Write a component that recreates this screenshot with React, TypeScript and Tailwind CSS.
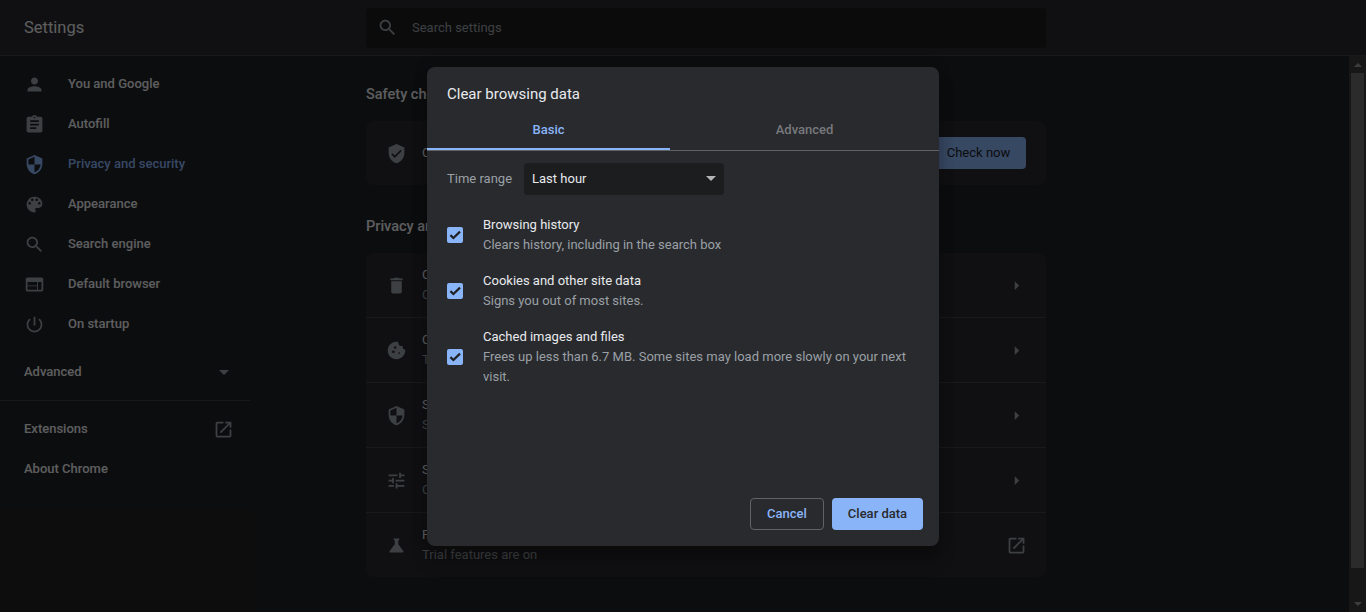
const icons = {
  person: "M12 12c2.21 0 4-1.79 4-4s-1.79-4-4-4-4 1.79-4 4 1.79 4 4 4zm0 2c-2.67 0-8 1.34-8 4v2h16v-2c0-2.66-5.33-4-8-4z",
  assignment: "M19 3h-4.18C14.4 1.84 13.3 1 12 1c-1.3 0-2.4.84-2.82 2H5c-1.1 0-2 .9-2 2v14c0 1.1.9 2 2 2h14c1.1 0 2-.9 2-2V5c0-1.1-.9-2-2-2zm-7 0c.55 0 1 .45 1 1s-.45 1-1 1-1-.45-1-1 .45-1 1-1zm2 14H7v-2h7v2zm3-4H7v-2h10v2zm0-4H7V7h10v2z",
  security: "M12 1L3 5v6c0 5.55 3.84 10.74 9 12 5.16-1.26 9-6.45 9-12V5l-9-4zm0 10.99h7c-.53 4.12-3.28 7.79-7 8.94V12H5V6.3l7-3.11v8.8z",
  palette: "M12 3c-4.97 0-9 4.03-9 9s4.03 9 9 9c.83 0 1.5-.67 1.5-1.5 0-.39-.15-.74-.39-1.01-.23-.26-.38-.61-.38-.99 0-.83.67-1.5 1.5-1.5H16c2.76 0 5-2.24 5-5 0-4.42-4.03-8-9-8zm-5.5 9c-.83 0-1.5-.67-1.5-1.5S5.67 9 6.5 9 8 9.67 8 10.5 7.33 12 6.5 12zm3-4C8.67 8 8 7.33 8 6.5S8.67 5 9.5 5s1.5.67 1.5 1.5S10.33 8 9.5 8zm5 0c-.83 0-1.5-.67-1.5-1.5S13.67 5 14.5 5s1.5.67 1.5 1.5S15.33 8 14.5 8zm3 4c-.83 0-1.5-.67-1.5-1.5S16.67 9 17.5 9s1.5.67 1.5 1.5-.67 1.5-1.5 1.5z",
  search: "M15.5 14h-.79l-.28-.27C15.41 12.59 16 11.11 16 9.5 16 5.91 13.09 3 9.5 3S3 5.91 3 9.5 5.91 16 9.5 16c1.61 0 3.09-.59 4.23-1.57l.27.28v.79l5 4.99L20.49 19l-4.99-5zm-6 0C7.01 14 5 11.99 5 9.5S7.01 5 9.5 5 14 7.01 14 9.5 11.99 14 9.5 14z",
  web: "M20 4H4c-1.1 0-1.99.9-1.99 2L2 18c0 1.1.9 2 2 2h16c1.1 0 2-.9 2-2V6c0-1.1-.9-2-2-2zm-5 14H4v-4h11v4zm0-5H4V9h11v4zm5 5h-4V9h4v9z",
  power: "M13 3h-2v10h2V3zm4.83 2.17l-1.42 1.42C17.99 7.86 19 9.81 19 12c0 3.87-3.13 7-7 7s-7-3.13-7-7c0-2.19 1.01-4.14 2.58-5.42L6.17 5.17C4.23 6.82 3 9.26 3 12c0 4.97 4.03 9 9 9s9-4.03 9-9c0-2.74-1.23-5.18-3.17-6.83z",
  openNew: "M19 19H5V5h7V3H5c-1.11 0-2 .9-2 2v14c0 1.1.89 2 2 2h14c1.1 0 2-.9 2-2v-7h-2v7zM14 3v2h3.59l-9.83 9.83 1.41 1.41L19 6.41V10h2V3h-7z",
  trash: "M6 19c0 1.1.9 2 2 2h8c1.1 0 2-.9 2-2V7H6v12zM19 4h-3.5l-1-1h-5l-1 1H5v2h14V4z",
  verified: "M12 1L3 5v6c0 5.55 3.84 10.74 9 12 5.16-1.26 9-6.45 9-12V5l-9-4zm-2 16l-4-4 1.41-1.41L10 14.17l6.59-6.59L18 9l-8 8z",
  cookie: "M21.95 10.99c-1.79-.03-3.7-1.95-2.68-4.22-2.97 1-5.78-1.59-5.19-4.56C7.11.74 2 6.41 2 12c0 5.52 4.48 10 10 10 5.89 0 10.54-5.08 9.95-11.01zM8.5 15c-.83 0-1.5-.67-1.5-1.5S7.67 12 8.5 12s1.5.67 1.5 1.5S9.33 15 8.5 15zm2-5C9.67 10 9 9.33 9 8.5S9.67 7 10.5 7s1.5.67 1.5 1.5-.67 1.5-1.5 1.5zm4.5 6c-.55 0-1-.45-1-1s.45-1 1-1 1 .45 1 1-.45 1-1 1z",
  tune: "M3 17v2h6v-2H3zM3 5v2h10V5H3zm10 16v-2h8v-2h-8v-2h-2v6h2zM7 9v2H3v2h4v2h2V9H7zm14 4v-2H11v2h10zm-6-4h2V7h4V5h-4V3h-2v6z",
  science: "M19.8 18.4L14 10.67V6.5l1.35-1.69c.26-.33.03-.81-.39-.81H9.04c-.42 0-.65.48-.39.81L10 6.5v4.17L4.2 18.4c-.49.66-.02 1.6.8 1.6h14c.82 0 1.29-.94.8-1.6z",
  caretRight: "M10 17l5-5-5-5v10z",
};

function Icon({ d, className }: { d: string; className?: string }) {
  return (
    <svg viewBox="0 0 24 24" fill="currentColor" className={className}>
      <path d={d} />
    </svg>
  );
}

const navItems = [
  { label: "You and Google", icon: icons.person },
  { label: "Autofill", icon: icons.assignment },
  { label: "Privacy and security", icon: icons.security, active: true },
  { label: "Appearance", icon: icons.palette },
  { label: "Search engine", icon: icons.search },
  { label: "Default browser", icon: icons.web },
  { label: "On startup", icon: icons.power },
];

const privacyRows = [
  { title: "Clear browsing data", sub: "Clear history, cookies, cache, and more", icon: icons.trash },
  { title: "Cookies and other site data", sub: "Third-party cookies are blocked in Incognito mode", icon: icons.cookie },
  { title: "Security", sub: "Safe Browsing (protection from dangerous sites) and other security settings", icon: icons.security },
  { title: "Site settings", sub: "Controls what information sites can use and show", icon: icons.tune },
  { title: "Privacy Sandbox", sub: "Trial features are on", icon: icons.science, external: true },
];

const clearOptions = [
  { title: "Browsing history", sub: "Clears history, including in the search box" },
  { title: "Cookies and other site data", sub: "Signs you out of most sites." },
  { title: "Cached images and files", sub: "Frees up less than 6.7 MB. Some sites may load more slowly on your next visit." },
];

function Sidebar() {
  return (
    <nav className="w-[250px] shrink-0 pt-2 text-[13px] font-medium text-[#e8eaed]">
      {navItems.map((item) => (
        <div
          key={item.label}
          className={`flex h-10 items-center pl-6 ${item.active ? "text-[#8ab4f8]" : ""}`}
        >
          <Icon
            d={item.icon}
            className={`-ml-[0.5px] mr-[0.5px] h-[21px] w-[21px] ${item.active ? "text-[#8ab4f8]" : "text-[#9aa0a6]"}`}
          />
          <span className="ml-[23px]">{item.label}</span>
        </div>
      ))}
      <div className="mt-2 flex h-10 items-center justify-between pl-6 pr-[21px]">
        <span>Advanced</span>
        <span className="h-0 w-0 border-x-[5px] border-t-[5px] border-x-transparent border-t-[#9aa0a6]" />
      </div>
      <div className="mt-2 border-t border-[#3f4042] pt-2">
        <div className="flex h-10 items-center justify-between pl-6 pr-4">
          <span>Extensions</span>
          <Icon d={icons.openNew} className="h-[21px] w-[21px] text-[#9aa0a6]" />
        </div>
        <div className="flex h-10 items-center pl-6">About Chrome</div>
      </div>
    </nav>
  );
}

function Content() {
  return (
    <main className="ml-[116px] w-[680px] shrink-0 text-[13px] text-[#e8eaed]">
      <h2 className="flex h-[65px] items-end pb-[15px] text-[14.5px] font-medium">Safety check</h2>
      <div className="flex h-16 items-center rounded-lg bg-[#292a2d] pl-5 pr-5">
        <Icon d={icons.verified} className="-ml-[0.5px] mr-[0.5px] h-[21px] w-[21px] text-[#9aa0a6]" />
        <span className="ml-[15px] flex-1">Chrome can help keep you safe from data breaches, bad extensions, and more</span>
        <button className="flex h-8 w-[95px] items-center justify-center rounded bg-[#8ab4f8] font-normal text-[#202124]">
          Check now
        </button>
      </div>
      <h2 className="flex h-[68px] items-end pb-[15px] text-[14.5px] font-medium">Privacy and security</h2>
      <div className="rounded-lg bg-[#292a2d]">
        {privacyRows.map((row, i) => (
          <div
            key={row.title}
            className={`flex items-center pl-5 pr-[19.5px] ${i > 0 ? "h-[65px] border-t border-[#3f4042]" : "h-16"}`}
          >
            <Icon d={row.icon} className="-ml-[0.5px] mr-[0.5px] h-[21px] w-[21px] text-[#9aa0a6]" />
            <div className="ml-[15px] flex-1 leading-5">
              <div>{row.title}</div>
              <div className="text-[#9aa0a6]">{row.sub}</div>
            </div>
            {row.external ? (
              <Icon d={icons.openNew} className="h-[21px] w-[21px] text-[#9aa0a6]" />
            ) : (
              <Icon d={icons.caretRight} className="h-[21px] w-[21px] text-[#9aa0a6]" />
            )}
          </div>
        ))}
      </div>
    </main>
  );
}

function Scrollbar() {
  return (
    <div className="ml-auto flex w-[17px] shrink-0 flex-col items-center bg-[#3a3a3a]">
      <div className="flex h-[17px] w-full items-center justify-center">
        <span className="h-0 w-0 border-x-[4px] border-b-[4px] border-x-transparent border-b-[#9a9a9a]" />
      </div>
      <div className="h-[495px] w-[13px] bg-[#6b6b6b]" />
      <div className="mt-auto flex h-[17px] w-full items-center justify-center">
        <span className="h-0 w-0 border-x-[4px] border-t-[4px] border-x-transparent border-t-[#9a9a9a]" />
      </div>
    </div>
  );
}

function Checkbox() {
  return (
    <span className="flex h-4 w-4 shrink-0 items-center justify-center rounded-[2px] bg-[#8ab4f8]">
      <svg viewBox="0 0 16 16" fill="none" stroke="#202124" strokeWidth="2.2" className="h-4 w-4">
        <path d="M3.4 8.1 6.4 11 13 4.6" />
      </svg>
    </span>
  );
}

function ClearDialog() {
  return (
    <div className="flex h-[479px] w-[512px] flex-col rounded-lg bg-[#292a2d] text-[13px] text-[#e8eaed] shadow-[0_0_16px_rgba(0,0,0,0.12),0_16px_16px_rgba(0,0,0,0.24)]">
      <h1 className="pl-5 pt-[17px] text-[15px] leading-5">Clear browsing data</h1>
      <div className="mt-[5px] flex h-[42px] border-b border-[#5f6368]">
        <div className="flex w-[243px] items-center justify-center border-b-2 border-[#8ab4f8] pt-1 font-medium text-[#8ab4f8]">
          Basic
        </div>
        <div className="flex flex-1 items-center justify-center pb-0.5 pt-1 font-medium text-[#77797d]">Advanced</div>
      </div>
      <div className="flex-1 px-5">
        <div className="mt-[12px] flex items-center">
          <span className="text-[#9aa0a6]">Time range</span>
          <div className="ml-3 flex h-8 w-[200px] items-center justify-between rounded bg-[#1c1d1f] pl-2 pr-[8px]">
            <span>Last hour</span>
            <span className="h-0 w-0 border-x-[5px] border-t-[5px] border-x-transparent border-t-[#b5b5b5]" />
          </div>
        </div>
        <div className="mt-5">
          {clearOptions.map((opt, i) => (
            <div key={opt.title} className={`flex items-center leading-5 ${i > 0 ? "mt-4" : ""}`}>
              <Checkbox />
              <div className="ml-5">
                <div>{opt.title}</div>
                <div className="text-[#9aa0a6]">{opt.sub}</div>
              </div>
            </div>
          ))}
        </div>
      </div>
      <div className="flex justify-end gap-2 pb-4 pr-4">
        <button className="h-8 w-[74px] rounded border border-[#5f6368] font-medium text-[#8ab4f8]">Cancel</button>
        <button className="h-8 w-[91px] rounded bg-[#8ab4f8] font-medium text-[#292a2d]">Clear data</button>
      </div>
    </div>
  );
}

export default function App() {
  return (
    <div className="relative flex h-screen w-full flex-col overflow-hidden bg-[#202124] font-['Roboto',sans-serif]">
      <header className="flex h-14 shrink-0 items-center border-b border-[#3f4042] bg-[#292a2d]">
        <div className="w-[366px] pl-6 pt-0.5 text-[16.5px] text-[#e8eaed]">Settings</div>
        <div className="flex h-10 w-[680px] items-center rounded bg-[#1c1d1f] pl-[11px] text-[13px] text-[#9aa0a6]">
          <Icon d={icons.search} className="h-[21px] w-[21px]" />
          <span className="ml-[14px]">Search settings</span>
        </div>
      </header>
      <div className="flex min-h-0 flex-1">
        <Sidebar />
        <Content />
        <Scrollbar />
      </div>
      <div className="absolute inset-0 flex items-center justify-center bg-black/60">
        <ClearDialog />
      </div>
    </div>
  );
}
